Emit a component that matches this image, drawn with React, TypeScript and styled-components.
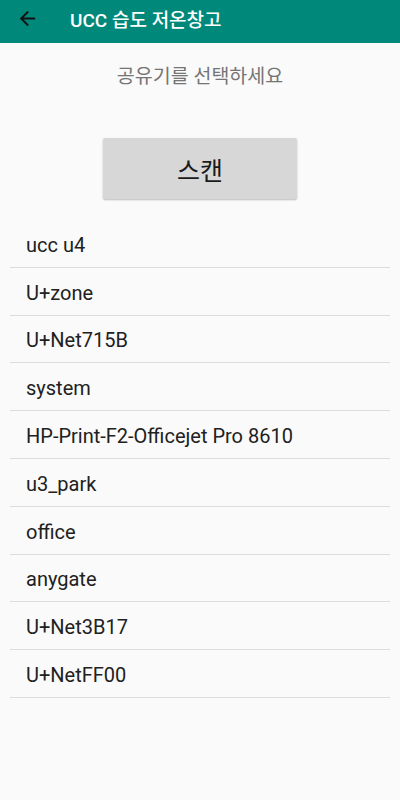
import React from 'react';
import styled, { createGlobalStyle } from 'styled-components';

const GlobalStyle = createGlobalStyle`
    html, body {
        margin: 0;
        padding: 0;
        background: #fafafa;
    }
    body {
        font-family: Roboto, "Noto Sans CJK KR", sans-serif;
    }
`;

const Screen = styled.div`
    display: flex;
    flex-direction: column;
    min-height: 800px;
    background: #fafafa;
`;

const AppBar = styled.header`
    align-items: center;
    background: #00897b;
    box-sizing: border-box;
    display: flex;
    height: 43px;
    padding: 0 0 6px 16px;
`;

const BackButton = styled.button`
    align-items: center;
    background: none;
    border: 0;
    display: flex;
    height: 23px;
    justify-content: center;
    padding: 0;
    width: 23px;
`;

const Title = styled.h1`
    color: #ffffff;
    font-family: Roboto, "Noto Sans CJK KR", sans-serif;
    font-size: 19px;
    font-weight: 500;
    margin: 0 0 0 31px;
`;

const Content = styled.main`
    display: flex;
    flex-direction: column;
    align-items: center;
    padding: 19px 10px 0;
`;

const Prompt = styled.p`
    color: #757575;
    font-size: 19.5px;
    line-height: 30px;
    margin: 0;
`;

const ScanButton = styled.button`
    background: #d6d7d6;
    border: 0;
    border-radius: 2px;
    box-shadow: 0 1px 2px rgba(0, 0, 0, 0.25);
    color: #1a1a1a;
    font-family: Roboto, "Noto Sans CJK KR", sans-serif;
    font-size: 25px;
    height: 61px;
    margin-top: 46px;
    width: 194px;
`;

const NetworkList = styled.ul`
    align-self: stretch;
    list-style: none;
    margin: 21px 0 0;
    padding: 0;
`;

const NetworkRow = styled.li`
    align-items: center;
    border-bottom: 1px solid #dcdcdc;
    box-sizing: border-box;
    color: #212121;
    display: flex;
    font-size: 20px;
    height: 47.8px;
    padding: 3px 0 0 16px;
`;

const networks = [
    'ucc u4',
    'U+zone',
    'U+Net715B',
    'system',
    'HP-Print-F2-Officejet Pro 8610',
    'u3_park',
    'office',
    'anygate',
    'U+Net3B17',
    'U+NetFF00',
];

const ArrowBack = () => (
    <svg width="23" height="23" viewBox="0 0 24 24">
        <path d="M20 11H7.83l5.59-5.59L12 4l-8 8 8 8 1.41-1.41L7.83 13H20v-2z" fill="#111" />
    </svg>
);

export default function App() {
    return (
        <Screen>
            <GlobalStyle />
            <AppBar>
                <BackButton aria-label="back">
                    <ArrowBack />
                </BackButton>
                <Title>UCC 습도 저온창고</Title>
            </AppBar>
            <Content>
                <Prompt>공유기를 선택하세요</Prompt>
                <ScanButton>스캔</ScanButton>
                <NetworkList>
                    {networks.map(name => (
                        <NetworkRow key={name}>{name}</NetworkRow>
                    ))}
                </NetworkList>
            </Content>
        </Screen>
    );
}
